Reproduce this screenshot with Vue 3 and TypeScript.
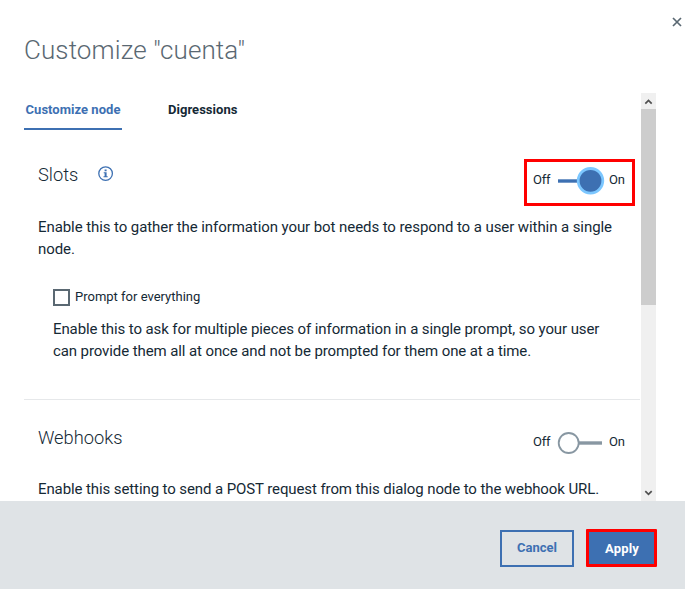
<script setup lang="ts">
import { ref } from 'vue'

const tabs = ['Customize node', 'Digressions']
const activeTab = ref(0)
const slotsOn = ref(true)
const webhooksOn = ref(false)
const promptAll = ref(false)
</script>

<template>
  <div class="dialog">
    <main class="main">
      <button class="close" aria-label="Close">
        <svg width="10" height="10" viewBox="0 0 10 10"><path d="M1 1l8 8M9 1l-8 8" /></svg>
      </button>
      <h1 class="title">Customize "cuenta"</h1>

      <div class="body">
        <div class="content">
          <nav class="tabs">
            <button
              v-for="(tab, i) in tabs"
              :key="tab"
              class="tab"
              :class="{ active: i === activeTab }"
              @click="activeTab = i"
            >{{ tab }}</button>
          </nav>

          <section class="section slots">
            <header class="head">
              <h2>Slots</h2>
              <svg class="info" width="16" height="16" viewBox="0 0 16 16">
                <circle cx="7.6" cy="7.6" r="6.8" />
                <path d="M6.6 3.5h2v1.7h-2zM5.7 6.2h2.9v4h1.1v1.1H5.5v-1.1h1.1V7.3h-.9z" />
              </svg>
              <div class="toggle-box highlight" @click="slotsOn = !slotsOn">
                <span class="off">Off</span>
                <svg class="switch" width="50" height="28" viewBox="0 0 50 28">
                  <path class="on-track" d="M3 14h20" />
                  <circle class="on-knob" cx="35.5" cy="13.8" r="12.3" />
                </svg>
                <span>On</span>
              </div>
            </header>
            <p class="text wide">Enable this to gather the information your bot needs to respond to a user within a single<br />node.</p>
            <div class="nested">
              <label class="check">
                <input v-model="promptAll" type="checkbox" />
                <span>Prompt for everything</span>
              </label>
              <p class="text">Enable this to ask for multiple pieces of information in a single prompt, so your user<br />can provide them all at once and not be prompted for them one at a time.</p>
            </div>
          </section>

          <section class="section webhooks">
            <header class="head">
              <h2>Webhooks</h2>
              <div class="toggle-box" @click="webhooksOn = !webhooksOn">
                <span class="off">Off</span>
                <svg class="switch" width="50" height="28" viewBox="0 0 50 28">
                  <path class="off-track" d="M24 14h23" />
                  <circle class="off-knob" cx="13.7" cy="14" r="10" />
                </svg>
                <span>On</span>
              </div>
            </header>
            <p class="text">Enable this setting to send a POST request from this dialog node to the webhook URL.</p>
          </section>
        </div>

        <div class="scrollbar">
          <svg width="15" height="16" viewBox="0 0 15 16"><path d="M4.3 10.6L7.5 7.4l3.2 3.2" /></svg>
          <div class="thumb"></div>
          <svg class="down" width="15" height="16" viewBox="0 0 15 16"><path d="M4.3 6.2l3.2 3.2 3.2-3.2" /></svg>
        </div>
      </div>
    </main>

    <footer class="footer">
      <button class="btn cancel">Cancel</button>
      <button class="btn apply">Apply</button>
    </footer>
  </div>
</template>

<style>
body {
  margin: 0;
  overflow: hidden;
}
</style>

<style scoped>
.dialog {
  box-sizing: border-box;
  width: 685px;
  height: 589px;
  display: flex;
  flex-direction: column;
  background: #fff;
  color: #152935;
  font-family: Roboto, "Liberation Sans", sans-serif;
  overflow: hidden;
}
.dialog * {
  box-sizing: border-box;
}
button {
  font: inherit;
  padding: 0;
  border: 0;
  background: none;
}
h1, h2, p {
  margin: 0;
}
.main {
  height: 501px;
  display: flex;
  flex-direction: column;
  overflow: hidden;
}
.close {
  align-self: flex-end;
  width: 10px;
  height: 10px;
  margin: 17px 3px 0 0;
}
.close svg {
  display: block;
}
.close path {
  fill: none;
  stroke: #5a6872;
  stroke-width: 1.7;
}
.title {
  height: 36px;
  margin: 5px 0 25px 24px;
  font-size: 26px;
  line-height: 36px;
  font-weight: 300;
  letter-spacing: 0.1px;
  color: #5a6872;
}
.body {
  flex: 1;
  min-height: 0;
  display: flex;
  padding-left: 24px;
}
.content {
  width: 616px;
  overflow: hidden;
}
.tabs {
  display: flex;
  gap: 45px;
  height: 37px;
}
.tab {
  height: 37px;
  padding: 0 1px 2px 1px;
  border-bottom: 2px solid transparent;
  font-size: 13px;
  line-height: 33px;
  font-weight: 700;
  letter-spacing: 0.03px;
  color: #152935;
  white-space: nowrap;
}
.tab.active {
  width: 98px;
  color: #3d70b2;
  border-bottom-color: #3d70b2;
}
.section {
  padding-left: 14px;
}
.slots {
  height: 270px;
  padding-top: 29px;
  border-bottom: 1px solid #e6e8ea;
}
.head {
  display: flex;
  height: 47px;
}
.head h2 {
  font-size: 18.3px;
  line-height: 32px;
  font-weight: 300;
}
.info {
  margin: 7px 0 0 20px;
}
.info circle {
  fill: none;
  stroke: #3d70b2;
  stroke-width: 1.3;
}
.info path {
  fill: #3d70b2;
}
.toggle-box {
  display: flex;
  align-items: center;
  width: 111px;
  height: 47px;
  margin: 0 5px 0 auto;
  padding: 0 0 4px 9px;
  font-size: 13px;
  letter-spacing: -0.2px;
}
.toggle-box span {
  padding-bottom: 2px;
  line-height: 20px;
}
.highlight {
  padding: 0 0 4px 6px;
  border: 3px solid #f00;
}
.off {
  width: 22px;
}
.switch {
  margin-right: 4px;
}
.on-track {
  stroke: #3d70b2;
  stroke-width: 3.4;
}
.on-knob {
  fill: #3d70b2;
  stroke: #7cc7ff;
  stroke-width: 2.8;
}
.off-track {
  stroke: #8897a2;
  stroke-width: 3.4;
}
.off-knob {
  fill: #fff;
  stroke: #8897a2;
  stroke-width: 1.8;
}
.text {
  margin-top: 10px;
  font-size: 15px;
  line-height: 22px;
  letter-spacing: -0.1px;
  white-space: nowrap;
}
.text.wide {
  letter-spacing: -0.08px;
}
.nested {
  padding: 27px 0 0 15px;
}
.nested .text {
  margin-top: 12px;
}
.check {
  display: flex;
  align-items: center;
  height: 19px;
  font-size: 13px;
}
.check span {
  padding-bottom: 1px;
}
.check input {
  appearance: none;
  width: 17px;
  height: 17px;
  margin: 2px 5px 0 0;
  border: 2px solid #5a6872;
  background: #fff;
}
.webhooks {
  padding-top: 21px;
}
.webhooks .text {
  margin-top: 11px;
}
.webhooks .head {
  height: 46px;
}
.webhooks .head h2 {
  line-height: 34px;
}
.scrollbar {
  display: flex;
  flex-direction: column;
  width: 15px;
  margin-left: 1px;
  background: #f0f0f0;
}
.scrollbar path {
  fill: none;
  stroke: #505050;
  stroke-width: 1.7;
}
.thumb {
  height: 196px;
  background: #cdcdcd;
}
.down {
  margin-top: auto;
}
.footer {
  flex: 1;
  display: flex;
  justify-content: flex-end;
  align-items: flex-start;
  gap: 12px;
  padding: 28px 28px 0 0;
  background: #dfe3e6;
}
.btn {
  font-size: 13px;
  font-weight: 700;
}
.cancel {
  width: 74px;
  height: 37px;
  margin-top: 1px;
  padding-bottom: 2px;
  border: 2px solid #3d70b2;
  color: #3d70b2;
}
.apply {
  width: 71px;
  height: 38px;
  padding-left: 1px;
  border: 3px solid #f00;
  border-radius: 1px;
  background: #3d70b2;
  color: #fff;
  letter-spacing: 0.2px;
}
</style>
